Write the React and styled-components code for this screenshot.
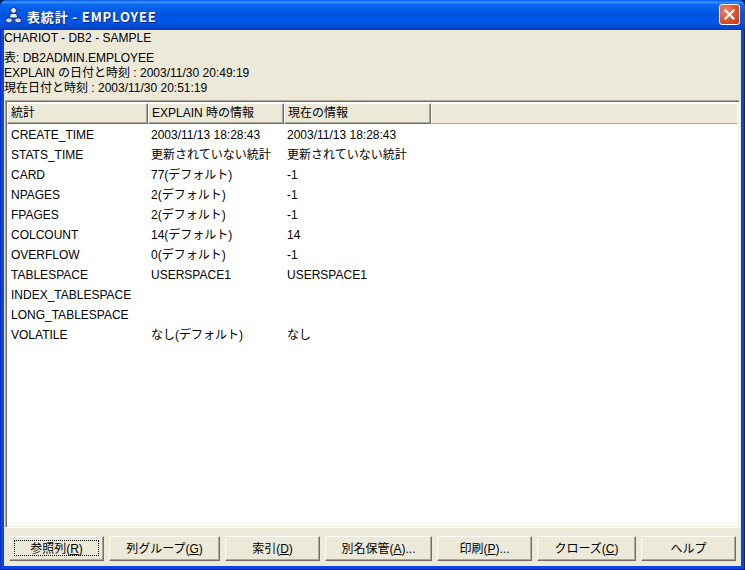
import React from 'react'
import styled, { createGlobalStyle } from 'styled-components'

const Global = createGlobalStyle`
  html, body {
    margin: 0;
    padding: 0;
    background: #0a246a;
  }
`

const Window = styled.div`
  width: 745px;
  height: 570px;
  display: flex;
  flex-direction: column;
  box-sizing: border-box;
  overflow: hidden;
  border-radius: 7px 7px 0 0;
  background: #0a45e0;
  box-shadow: inset 1px 0 0 #0831c0, inset -1px 0 0 #001ea0, inset 0 -1px 0 #001ea0;
  font-family: 'Liberation Sans', 'Noto Sans CJK JP', sans-serif;
  font-size: 12px;
  line-height: 15px;
  color: #000;
`

const TitleBar = styled.div`
  height: 30px;
  flex: none;
  display: flex;
  align-items: center;
  padding: 0 5px 0 5px;
  box-sizing: border-box;
  background: linear-gradient(
    180deg,
    #0058e6 0%,
    #3a93ff 8%,
    #0a6af0 14%,
    #0054e3 45%,
    #0055e5 75%,
    #0048cc 90%,
    #003dc0 100%
  );
`

const Title = styled.span`
  margin: 2px 0 0 5px;
  color: #fff;
  font-family: 'Noto Sans CJK JP', 'DejaVu Sans', sans-serif;
  font-weight: 700;
  font-size: 13px;
  letter-spacing: 0.85px;
  text-shadow: 1px 1px 0 #0f1f8c;
`

const CloseButton = styled.div`
  margin-left: auto;
  width: 21px;
  height: 21px;
  margin-top: -1px;
  box-sizing: border-box;
  display: flex;
  align-items: center;
  justify-content: center;
  border: 1px solid #fff;
  border-radius: 3px;
  background: radial-gradient(circle at 30% 30%, #ec8a6e 0%, #dc5a32 45%, #c4340e 100%);
`

const Body = styled.div`
  flex: 1;
  margin: 0 4px 4px;
  display: flex;
  flex-direction: column;
  background: #ece9d8;
  min-height: 0;
`

const Info = styled.div`
  flex: none;
  height: 70px;
  box-sizing: border-box;
  padding-top: 1px;
`

const InfoLine = styled.div`
  height: 15px;
  margin-top: ${p => p.$gap || 0}px;
  white-space: nowrap;
`

const Frame = styled.div`
  flex: 1;
  min-height: 0;
  margin: 0 1px 0 1px;
  display: flex;
  flex-direction: column;
  border-top: 1px solid #aca899;
  border-left: 1px solid #aca899;
  border-right: 1px solid #fff;
  border-bottom: 1px solid #fff;
  box-shadow: inset 1px 1px 0 #716f64, inset -1px -1px 0 #f1efe2;
  padding: 2px 2px 2px 1px;
  background: #fff;
`

const Header = styled.div`
  height: 21px;
  flex: none;
  display: flex;
  background: #ece9d8;
  box-sizing: border-box;
`

const HeaderCell = styled.div`
  width: ${p => p.$w}px;
  box-sizing: border-box;
  padding: 2px 0 0 3px;
  border-top: 1px solid #fff;
  border-left: 1px solid #fff;
  border-right: 1px solid #716f64;
  border-bottom: 1px solid #716f64;
  box-shadow: inset -1px -1px 0 #aca899;
  white-space: nowrap;
`

const HeaderFill = styled.div`
  flex: 1;
  border-top: 1px solid #fff;
  border-left: 1px solid #fff;
  border-bottom: 1px solid #aca899;
`

const Rows = styled.div`
  flex: 1;
  padding-top: 1px;
  background: #fff;
`

const Row = styled.div`
  height: 20px;
  display: flex;
  align-items: center;
  white-space: nowrap;
`

const Cell = styled.div`
  width: ${p => p.$w}px;
  padding-left: ${p => p.$pad}px;
  box-sizing: border-box;
  flex: none;
`

const ButtonBar = styled.div`
  flex: none;
  height: 38px;
  display: flex;
  gap: 5px;
  padding: 8px 0 0 5px;
  box-sizing: border-box;
`

const Button = styled.div`
  width: ${p => p.$w}px;
  height: 25px;
  box-sizing: border-box;
  padding-top: 1px;
  display: flex;
  align-items: center;
  justify-content: center;
  background: #ece9d8;
  border-top: 1px solid #fff;
  border-left: 1px solid #fff;
  border-right: 1px solid #716f64;
  border-bottom: 1px solid #716f64;
  box-shadow: inset -1px -1px 0 #aca899;
  position: relative;
  white-space: nowrap;
`

const FocusRing = styled.div`
  position: absolute;
  inset: 3px 4px 4px 4px;
  border: 1px dotted #000;
`

const Key = styled.span`
  text-decoration: underline;
`

const rows = [
  ['CREATE_TIME', '2003/11/13 18:28:43', '2003/11/13 18:28:43'],
  ['STATS_TIME', '更新されていない統計', '更新されていない統計'],
  ['CARD', '77(デフォルト)', '-1'],
  ['NPAGES', '2(デフォルト)', '-1'],
  ['FPAGES', '2(デフォルト)', '-1'],
  ['COLCOUNT', '14(デフォルト)', '14'],
  ['OVERFLOW', '0(デフォルト)', '-1'],
  ['TABLESPACE', 'USERSPACE1', 'USERSPACE1'],
  ['INDEX_TABLESPACE', '', ''],
  ['LONG_TABLESPACE', '', ''],
  ['VOLATILE', 'なし(デフォルト)', 'なし'],
]

const buttons = [
  { w: 95, label: '参照列(', key: 'R', end: ')', focus: true },
  { w: 111, label: '列グループ(', key: 'G', end: ')' },
  { w: 95, label: '索引(', key: 'D', end: ')' },
  { w: 107, label: '別名保管(', key: 'A', end: ')...' },
  { w: 95, label: '印刷(', key: 'P', end: ')...' },
  { w: 99, label: 'クローズ(', key: 'C', end: ')' },
  { w: 95, label: 'ヘルプ' },
]

const AppIcon = () => (
  <svg width="17" height="17" viewBox="0 0 17 17" style={{ flex: 'none' }}>
    <path d="M5.5 6.5h6l1.5 4.5h-9z" fill="#e6edfd" stroke="#14246e" />
    <circle cx="8.5" cy="3.4" r="2.9" fill="#eef3ff" stroke="#14246e" />
    <ellipse cx="4" cy="13.4" rx="3.4" ry="2.6" fill="#c9d9f8" stroke="#14246e" />
    <ellipse cx="13" cy="13.4" rx="3.4" ry="2.6" fill="#c9d9f8" stroke="#14246e" />
  </svg>
)

const CloseIcon = () => (
  <svg width="11" height="11" viewBox="0 0 11 11">
    <path d="M1.5 1.5l8 8M9.5 1.5l-8 8" stroke="#fff" strokeWidth="2" strokeLinecap="square" />
  </svg>
)

export default function App() {
  return (
    <Window>
      <Global />
      <TitleBar>
        <AppIcon />
        <Title>表統計 - EMPLOYEE</Title>
        <CloseButton>
          <CloseIcon />
        </CloseButton>
      </TitleBar>
      <Body>
        <Info>
          <InfoLine>CHARIOT - DB2 - SAMPLE</InfoLine>
          <InfoLine $gap={5}>表: DB2ADMIN.EMPLOYEE</InfoLine>
          <InfoLine>EXPLAIN の日付と時刻 : 2003/11/30 20:49:19</InfoLine>
          <InfoLine>現在日付と時刻 : 2003/11/30 20:51:19</InfoLine>
        </Info>
        <Frame>
          <Header>
            <HeaderCell $w={141}>統計</HeaderCell>
            <HeaderCell $w={136}>EXPLAIN 時の情報</HeaderCell>
            <HeaderCell $w={147}>現在の情報</HeaderCell>
            <HeaderFill />
          </Header>
          <Rows>
            {rows.map(r => (
              <Row key={r[0]}>
                <Cell $w={141} $pad={4}>{r[0]}</Cell>
                <Cell $w={136} $pad={3}>{r[1]}</Cell>
                <Cell $w={147} $pad={3}>{r[2]}</Cell>
              </Row>
            ))}
          </Rows>
        </Frame>
        <ButtonBar>
          {buttons.map(b => (
            <Button key={b.label} $w={b.w}>
              {b.focus && <FocusRing />}
              <span>
                {b.label}
                {b.key && <Key>{b.key}</Key>}
                {b.end}
              </span>
            </Button>
          ))}
        </ButtonBar>
      </Body>
    </Window>
  )
}
